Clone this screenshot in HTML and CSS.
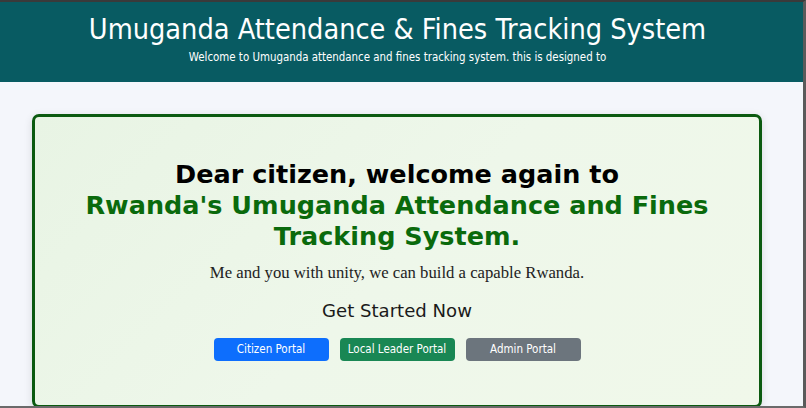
FILE: index.html
```html
<!DOCTYPE html>
<html lang="en">
<head>
<meta charset="utf-8">
<title>Umuganda Attendance &amp; Fines Tracking System</title>
<link rel="stylesheet" href="styles.css">
</head>
<body>
<div class="frame">
  <header class="topbar">
    <h1 class="topbar-title">Umuganda Attendance &amp; Fines Tracking System</h1>
    <p class="topbar-sub">Welcome to Umuganda attendance and fines tracking system. this is designed to</p>
  </header>
  <main class="content">
    <section class="welcome-card">
      <h2 class="welcome-title">Dear citizen, welcome again to<br><span class="welcome-green">Rwanda's Umuganda Attendance and Fines Tracking System.</span></h2>
      <p class="welcome-motto">Me and you with unity, we can build a capable Rwanda.</p>
      <h3 class="welcome-start">Get Started Now</h3>
      <div class="portal-buttons">
        <a class="portal-btn btn-blue" href="#">Citizen Portal</a>
        <a class="portal-btn btn-green" href="#">Local Leader Portal</a>
        <a class="portal-btn btn-gray" href="#">Admin Portal</a>
      </div>
    </section>
  </main>
</div>
</body>
</html>
```
FILE: styles.css
```css
html, body {
  margin: 0;
  padding: 0;
  height: 100%;
  background: #f4f6fb;
}
body {
  font-family: "DejaVu Sans Condensed", "DejaVu Sans", sans-serif;
}
.frame {
  height: 100vh;
  box-sizing: border-box;
  border-top: 2px solid #3a3a3a;
  border-right: 3px solid #5a5a5a;
  border-bottom: 2px solid #6a6a6a;
  overflow: hidden;
  display: flex;
  flex-direction: column;
}
.topbar {
  background: #085b62;
  color: #ffffff;
  text-align: center;
  padding: 10px 8px 16px 0;
  height: 80px;
  box-sizing: border-box;
}
.topbar-title {
  margin: 0;
  font-weight: normal;
  font-size: 28.6px;
  line-height: 34px;
}
.topbar-sub {
  margin: 3px 0 0;
  font-size: 11.4px;
  line-height: 16px;
}
.content {
  flex: 1;
  padding: 32px 41px 0 32px;
  display: flex;
  flex-direction: column;
}
.welcome-card {
  flex: 1;
  margin-bottom: -2px;
  border: 3px solid #0b5a10;
  border-radius: 7px;
  background: linear-gradient(135deg, #e8f4e4 0%, #eef7ea 50%, #f0f8ea 100%);
  box-shadow: 0 2px 8px rgba(0,0,0,0.12);
  text-align: center;
  padding-top: 42px;
}
.welcome-title {
  margin: 0;
  font-family: "DejaVu Sans", sans-serif;
  font-size: 25.5px;
  line-height: 31px;
  font-weight: bold;
  color: #000000;
}
.welcome-green {
  color: #0a6a0c;
}
.welcome-motto {
  margin: 9px 0 0;
  font-family: "Liberation Serif", serif;
  font-size: 16.7px;
  line-height: 24px;
  color: #222222;
}
.welcome-start {
  margin: 14px 0 0;
  font-weight: normal;
  font-family: "DejaVu Sans", sans-serif;
  font-size: 18.1px;
  line-height: 24px;
  color: #1a1a1a;
}
.portal-buttons {
  margin-top: 15px;
  display: flex;
  justify-content: center;
  gap: 11px;
}
.portal-btn {
  width: 115px;
  height: 23px;
  line-height: 23px;
  border-radius: 4px;
  color: #ffffff;
  font-size: 11.5px;
  text-decoration: none;
  display: block;
}
.btn-blue { background: #0d6efd; }
.btn-green { background: #198754; }
.btn-gray { background: #6c757d; }
```
